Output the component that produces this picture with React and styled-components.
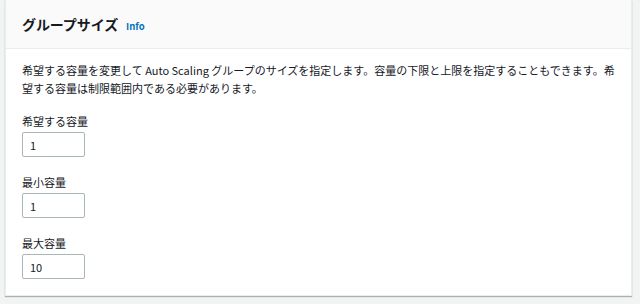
import React from "react";
import styled, { createGlobalStyle } from "styled-components";

const Global = createGlobalStyle`
  html, body { margin: 0; padding: 0; background: #f2f3f3; }
  body { font-family: "Noto Sans CJK JP", "Noto Sans", sans-serif; color: #16191f; }
`;

const Page = styled.div`
  padding: 0 8px 7px 5px;
  width: 640px;
  box-sizing: border-box;
`;

const Card = styled.section`
  background: #fff;
  border: 1px solid #eaeded;
  border-top: none;
  box-shadow: 0 1px 1px 0 rgba(0, 28, 36, 0.3);
`;

const Header = styled.header`
  display: flex;
  align-items: center;
  gap: 8px;
  height: 48px;
  padding: 0 16px;
  background: #fafafa;
  border-bottom: 1px solid #eaeded;
`;

const Title = styled.h2`
  margin: 0;
  font-size: 14px;
  font-weight: 700;
  color: #16191f;
  letter-spacing: -0.1px;
`;

const InfoLink = styled.a`
  font-size: 9.5px;
  font-weight: 700;
  color: #0073bb;
  text-decoration: none;
  margin-top: 3px;
`;

const Body = styled.div`
  display: flex;
  flex-direction: column;
  padding: 12px 16px 16px 16px;
`;

const Description = styled.p`
  margin: 0 0 16px;
  font-size: 11px;
  line-height: 18px;
  color: #16191f;
`;

const Field = styled.div`
  display: flex;
  flex-direction: column;
  align-items: flex-start;
  gap: 3px;
  & + & { margin-top: 17px; }
`;

const Label = styled.label`
  font-size: 11px;
  line-height: 16px;
  color: #16191f;
`;

const Input = styled.input`
  box-sizing: border-box;
  width: 63px;
  height: 25px;
  padding: 0 7px;
  border: 1px solid #aab7b8;
  border-radius: 2px;
  font-family: inherit;
  font-size: 11px;
  color: #16191f;
  background: #fff;
  outline: none;
`;

const fields = [
  { id: "desired", label: "希望する容量", value: "1" },
  { id: "min", label: "最小容量", value: "1" },
  { id: "max", label: "最大容量", value: "10" },
];

export default function App() {
  return (
    <Page>
      <Global />
      <Card>
        <Header>
          <Title>グループサイズ</Title>
          <InfoLink href="#">Info</InfoLink>
        </Header>
        <Body>
          <Description>
            希望する容量を変更して Auto Scaling グループのサイズを指定します。容量の下限と上限を指定することもできます。希望する容量は制限範囲内である必要があります。
          </Description>
          {fields.map((f) => (
            <Field key={f.id}>
              <Label htmlFor={f.id}>{f.label}</Label>
              <Input id={f.id} defaultValue={f.value} />
            </Field>
          ))}
        </Body>
      </Card>
    </Page>
  );
}
